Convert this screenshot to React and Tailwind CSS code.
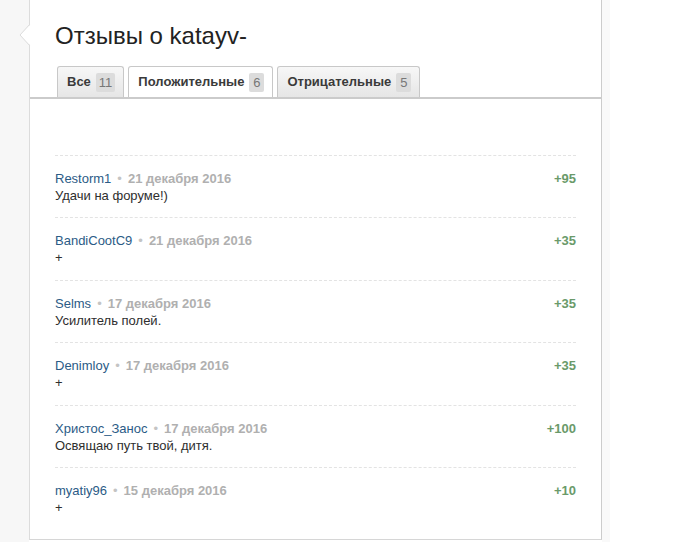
import React from 'react';

const reviews = [
  { name: 'Restorm1', date: '21 декабря 2016', text: 'Удачи на форуме!)', score: '+95' },
  { name: 'BandiCootC9', date: '21 декабря 2016', text: '+', score: '+35' },
  { name: 'Selms', date: '17 декабря 2016', text: 'Усилитель полей.', score: '+35' },
  { name: 'Denimloy', date: '17 декабря 2016', text: '+', score: '+35' },
  { name: 'Христос_Занос', date: '17 декабря 2016', text: 'Освящаю путь твой, дитя.', score: '+100' },
  { name: 'myatiy96', date: '15 декабря 2016', text: '+', score: '+10' },
];

const tabs = [
  { label: 'Все', count: 11 },
  { label: 'Положительные', count: 6, active: true },
  { label: 'Отрицательные', count: 5 },
];

const Tab = ({ label, count, active }) => (
  <div
    className={`h-[31px] flex items-center pl-[9px] pr-[8px] border border-b-0 border-[#c8c8c8] rounded-t-[3px] ${
      active ? 'bg-white' : 'bg-gradient-to-b from-[#f7f7f7] to-[#e6e6e6]'
    }`}
  >
    <span className="font-bold text-[13px] text-[#3a3a3a]">{label}</span>
    <span className="ml-[5px] h-[19px] min-w-[15px] px-[3px] leading-[19px] text-center text-[13px] text-[#777] bg-[#dcdcdc] rounded-[2px]">
      {count}
    </span>
  </div>
);

const ReviewRow = ({ name, date, text, score }) => (
  <div className="border-t border-dashed border-[#e3e3e3] pt-[14px] pb-[13.4px] flex justify-between text-[13px] leading-[17px]">
    <div>
      <div>
        <span className="text-[#2b5b86]">{name}</span>
        <span className="text-[#c4c4c4] mx-[6px]">•</span>
        <span className="font-bold text-[#b0b0b0]">{date}</span>
      </div>
      <div className="text-[#2e2e2e]">{text}</div>
    </div>
    <div className="font-bold text-[#6a9a6a]">{score}</div>
  </div>
);

export default function App() {
  return (
    <div
      className="flex w-[683px] h-[542px] bg-white overflow-hidden"
      style={{ fontFamily: '"Liberation Sans", Arial, sans-serif' }}
    >
      <div className="w-[29px] bg-[#f7f7f7]" />
      <div className="relative w-[573px] h-[540px] bg-white border-l border-r border-b border-l-[#dcdcdc] border-r-[#cccccc] border-b-[#d6d6d6]">
        {/* bubble pointer */}
        <svg className="absolute left-[-11px] top-[24px]" width="12" height="22" viewBox="0 0 12 22">
          <polygon points="12,0 1,11 12,22" fill="#ffffff" />
          <polyline points="11,0 1,11 11,22" fill="none" stroke="#dcdcdc" strokeWidth="1" />
        </svg>

        <h1 className="pt-[22px] pl-[25px] text-[24px] leading-[28px] text-[#222] font-normal">
          Отзывы о katayv-
        </h1>

        <div className="mt-[16px] flex items-end gap-[4px] pl-[27px] border-b-2 border-[#cbcbcb]">
          {tabs.map((t) => (
            <Tab key={t.label} {...t} />
          ))}
        </div>

        <div className="pt-[56px] px-[25px]">
          {reviews.map((r) => (
            <ReviewRow key={r.name} {...r} />
          ))}
        </div>
      </div>
      <div className="w-[8px] bg-[#f9f9f9]" />
      <div className="flex-1 bg-white" />
    </div>
  );
}
